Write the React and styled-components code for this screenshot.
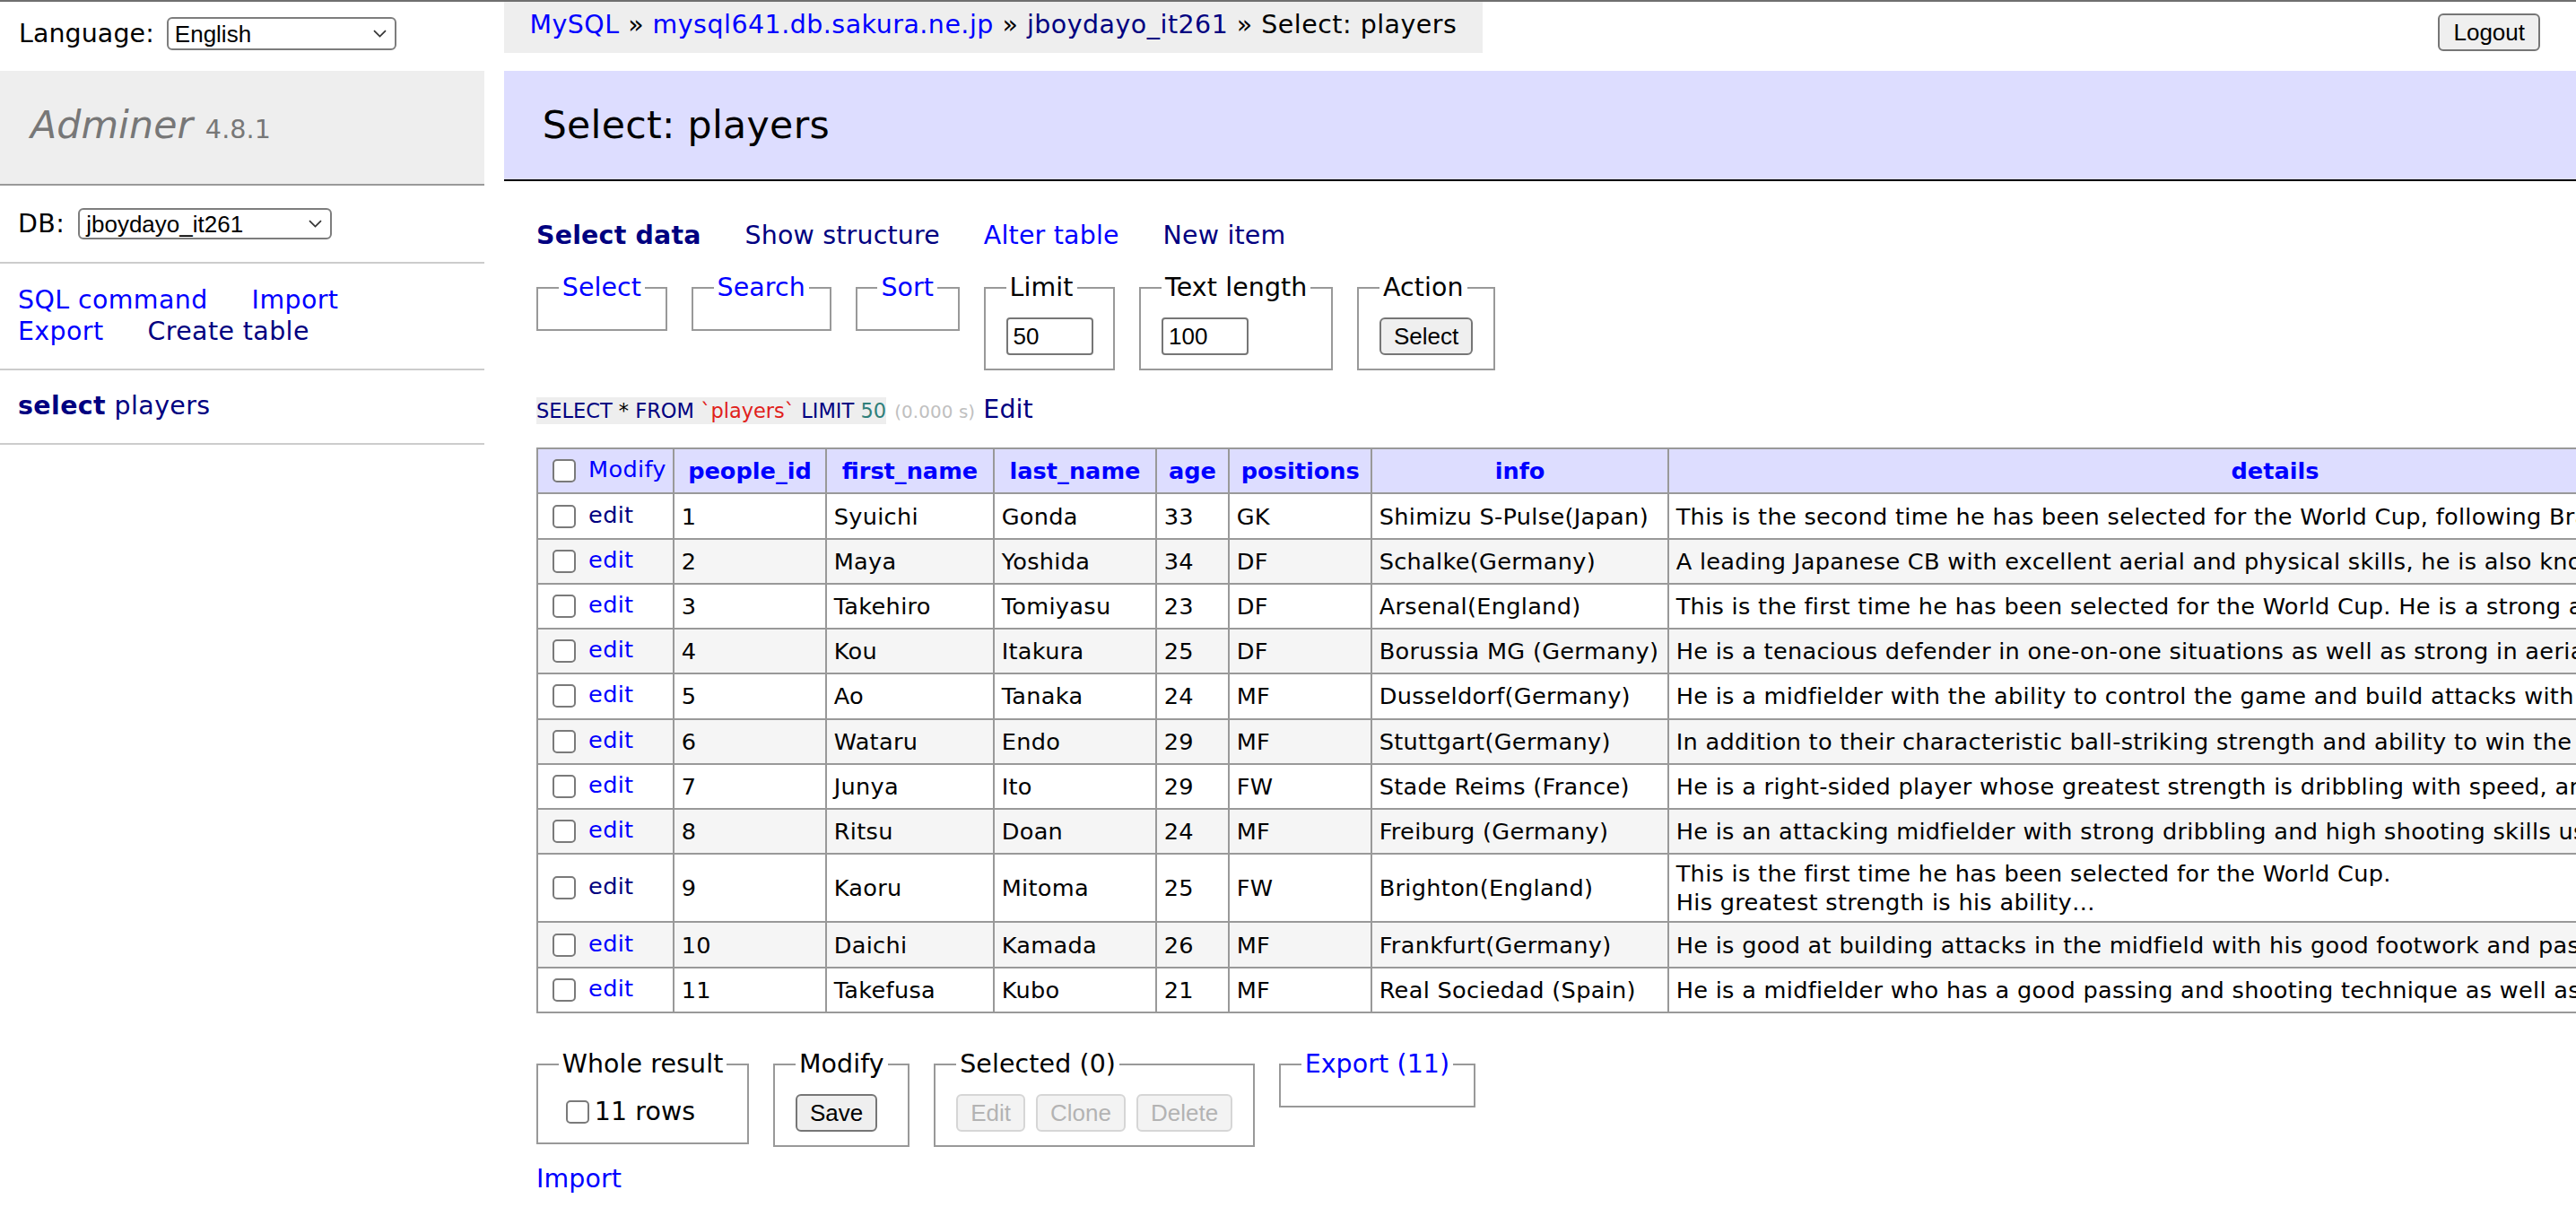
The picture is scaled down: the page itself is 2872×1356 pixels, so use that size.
import React from "react";
import styled, { createGlobalStyle } from "styled-components";

const GlobalStyle = createGlobalStyle`
  html, body {
    margin: 0;
    padding: 0;
    overflow: hidden;
    background: #fff;
  }
  body {
    font-family: "DejaVu Sans", Verdana, sans-serif;
    font-size: 28.44px;
    line-height: 1.25;
    letter-spacing: 0.1px;
    color: #000;
  }
`;

const Page = styled.div`
  width: 100vw;
  min-height: 100vh;
  box-sizing: border-box;
  border-top: 2px solid #6f6f6f;
`;

const TopBar = styled.div`
  display: flex;
  align-items: flex-start;
  height: 57px;
`;

const Lang = styled.div`
  flex: 0 0 562px;
  box-sizing: border-box;
  display: flex;
  align-items: center;
  gap: 14px;
  height: 51px;
  margin-top: 10px;
  padding-left: 21px;
`;

const Breadcrumb = styled.div`
  background: #eee;
  height: 57px;
  line-height: 51px;
  padding: 0 28.44px;
  white-space: nowrap;
  letter-spacing: 0.5px;
`;

const Link = styled.a`
  color: ${(p) => (p.$visited ? "#000080" : "#0000ff")};
  font-weight: ${(p) => (p.$bold ? "bold" : "normal")};
  text-decoration: none;
  cursor: pointer;
`;

const Button = styled.button`
  box-sizing: border-box;
  height: 42px;
  margin: 0;
  padding: 0 14px;
  font: 26px "Liberation Sans", Arial, sans-serif;
  letter-spacing: 0;
  color: ${(p) => (p.disabled ? "#b3b3b3" : "#000")};
  background: ${(p) => (p.disabled ? "#f3f3f3" : "#efefef")};
  border: 2px solid ${(p) => (p.disabled ? "#d6d6d6" : "#767676")};
  border-radius: 6px;
  vertical-align: middle;
`;

const LogoutButton = styled(Button)`
  margin: 13px 40px 0 auto;
  padding: 0 15px;
`;

const SelectBox = styled.div`
  box-sizing: border-box;
  display: inline-flex;
  align-items: center;
  justify-content: space-between;
  width: ${(p) => p.$w}px;
  height: ${(p) => p.$h}px;
  padding: 0 9px 0 7px;
  border: 2px solid #7d7d7d;
  border-radius: 6px;
  background: #fff;
  font: 26px "Liberation Sans", Arial, sans-serif;
  letter-spacing: 0;
  line-height: 1;
  color: #000;
`;

const Main = styled.div`
  display: flex;
  align-items: flex-start;
  margin-top: 20px;
`;

const Menu = styled.div`
  flex: 0 0 540px;
  letter-spacing: 0.4px;
`;

const Brand = styled.h1`
  margin: 0;
  padding: 34.1px 34px;
  font-size: 42.66px;
  line-height: 53.3px;
  font-weight: normal;
  letter-spacing: 0.1px;
  color: #777;
  background: #eee;
  border-bottom: 2px solid #999;
`;

const BrandName = styled.span`
  font-style: italic;
`;

const Version = styled.span`
  font-size: 67%;
`;

const MenuBlock = styled.div`
  padding: 22.75px 20px;
  border-bottom: 2px solid #ccc;
  line-height: 35.55px;
`;

const DbRow = styled(MenuBlock)`
  display: flex;
  align-items: center;
  gap: 15px;
  height: 39px;
`;

const MenuLinks = styled(MenuBlock)`
  ${Link} {
    white-space: nowrap;
    margin-right: 39.5px;
  }
`;

const Content = styled.div`
  flex: 1 1 auto;
  min-width: 0;
  margin-left: 22px;
`;

const Title = styled.h2`
  margin: 0 0 42.5px;
  padding: 34.1px 42.66px;
  font-size: 42.66px;
  line-height: 53.3px;
  font-weight: normal;
  letter-spacing: 0.3px;
  color: #000;
  background: #ddf;
  border-bottom: 2px solid #000;
`;

const Body = styled.div`
  padding-left: 36px;
`;

const Tabs = styled.p`
  margin: 0;
  line-height: 35.55px;
  white-space: nowrap;
  letter-spacing: 0.2px;

  ${Link} {
    margin-right: 39.5px;
  }
`;

const FieldRow = styled.div`
  display: flex;
  align-items: flex-start;
  gap: 27px;
  margin-top: ${(p) => p.$top || 22.75}px;
`;

const Fieldset = styled.fieldset`
  margin: 0;
  min-width: 0;
  padding: 14.2px 22.75px;
  border: 2px solid #999;
  line-height: 35.55px;
`;

const Legend = styled.legend`
  padding: 0 4px;
  white-space: nowrap;
`;

const FieldBody = styled.div`
  display: flex;
  align-items: center;
  gap: 12px;
  min-height: ${(p) => p.$h || 44}px;
`;

const TextInput = styled.input`
  box-sizing: border-box;
  width: 97px;
  height: 42px;
  margin: 0;
  padding: 0 6px;
  font: 26px "Liberation Sans", Arial, sans-serif;
  letter-spacing: 0;
  color: #000;
  background: #fff;
  border: 2px solid #767676;
  border-radius: 4px;
`;

const Check = styled.input.attrs({ type: "checkbox" })`
  appearance: none;
  box-sizing: border-box;
  width: 26px;
  height: 26px;
  margin: 6px 6px 6px 8px;
  border: 2px solid #7a7a7a;
  border-radius: 5px;
  background: #fff;
  vertical-align: middle;
`;

const RowLabel = styled.label`
  display: flex;
  align-items: center;
  white-space: nowrap;
`;

const SqlLine = styled.p`
  margin: 25.5px 0 0;
  line-height: 35.55px;
  white-space: nowrap;
`;

const Code = styled.code`
  font-family: "DejaVu Sans", Verdana, sans-serif;
  font-size: 22.5px;
  letter-spacing: 0;
  padding: 2px 0;
  background: #eee;
  color: #000;
`;

const Token = styled.span`
  color: ${(p) => p.$c};
`;

const Time = styled.span`
  font-size: 70%;
  color: silver;
`;

const Grid = styled.table`
  margin-top: 22px;
  width: 2614px;
  table-layout: fixed;
  border-collapse: collapse;
  font-size: 25.6px;
  line-height: 32px;
  letter-spacing: 0.3px;
`;

const HeadCell = styled.th`
  padding: 5.12px 12.8px;
  background: #ddf;
  border: 2px solid #999;
  text-align: center;
  font-weight: bold;
  white-space: nowrap;
  letter-spacing: 0;
`;

const ModifyCell = styled.td`
  padding: 5.12px 7.68px;
  background: #ddf;
  border: 2px solid #999;
  white-space: nowrap;
`;

const Cell = styled.td`
  padding: 5.12px 7.68px;
  background: ${(p) => (p.$odd ? "#f5f5f5" : "#fff")};
  border: 2px solid #999;
  white-space: pre;
  vertical-align: middle;
`;

const Footer = styled(FieldRow)`
  padding-bottom: 14.2px;
`;

const BottomLink = styled(Link)`
  display: block;
  margin-top: 4px;
  line-height: 35.55px;
`;

const Chevron = () => (
  <svg width="15" height="9" viewBox="0 0 15 9">
    <path d="M1 1.2l6.5 6.3L14 1.2" stroke="#333" strokeWidth="1.7" fill="none" />
  </svg>
);

const columns = [
  { name: "people_id", w: 170 },
  { name: "first_name", w: 187 },
  { name: "last_name", w: 181 },
  { name: "age", w: 81 },
  { name: "positions", w: 159 },
  { name: "info", w: 331 },
  { name: "details", w: 1353 },
];

const players = [
  [1, "Syuichi", "Gonda", 33, "GK", "Shimizu S-Pulse(Japan)", "This is the second time he has been selected for the World Cup, following Brazil 2014. A goalkeeper…"],
  [2, "Maya", "Yoshida", 34, "DF", "Schalke(Germany)", "A leading Japanese CB with excellent aerial and physical skills, he is also known for his leader…"],
  [3, "Takehiro", "Tomiyasu", 23, "DF", "Arsenal(England)", "This is the first time he has been selected for the World Cup. He is a strong and versatile def…"],
  [4, "Kou", "Itakura", 25, "DF", "Borussia MG (Germany)", "He is a tenacious defender in one-on-one situations as well as strong in aerial battles and bu…"],
  [5, "Ao", "Tanaka", 24, "MF", "Dusseldorf(Germany)", "He is a midfielder with the ability to control the game and build attacks with accurate pass…"],
  [6, "Wataru", "Endo", 29, "MF", "Stuttgart(Germany)", "In addition to their characteristic ball-striking strength and ability to win the ball back…"],
  [7, "Junya", "Ito", 29, "FW", "Stade Reims (France)", "He is a right-sided player whose greatest strength is dribbling with speed, and his crosses…"],
  [8, "Ritsu", "Doan", 24, "MF", "Freiburg (Germany)", "He is an attacking midfielder with strong dribbling and high shooting skills using his left…"],
  [9, "Kaoru", "Mitoma", 25, "FW", "Brighton(England)", "This is the first time he has been selected for the World Cup.\nHis greatest strength is his ability…"],
  [10, "Daichi", "Kamada", 26, "MF", "Frankfurt(Germany)", "He is good at building attacks in the midfield with his good footwork and passing range…"],
  [11, "Takefusa", "Kubo", 21, "MF", "Real Sociedad (Spain)", "He is a midfielder who has a good passing and shooting technique as well as dribbling…"],
];

const visitedEdits = [1, 9];

export default function App() {
  return (
    <Page>
      <GlobalStyle />
      <TopBar>
        <Lang>
          Language:
          <SelectBox $w={256} $h={37}>
            English
            <Chevron />
          </SelectBox>
        </Lang>
        <Breadcrumb>
          <Link>MySQL</Link> » <Link>mysql641.db.sakura.ne.jp</Link> »{" "}
          <Link $visited>jboydayo_it261</Link> » Select: players
        </Breadcrumb>
        <LogoutButton>Logout</LogoutButton>
      </TopBar>

      <Main>
        <Menu>
          <Brand>
            <BrandName>Adminer</BrandName> <Version>4.8.1</Version>
          </Brand>
          <DbRow>
            DB:
            <SelectBox $w={283} $h={35}>
              jboydayo_it261
              <Chevron />
            </SelectBox>
          </DbRow>
          <MenuLinks>
            <Link>SQL command</Link> <Link>Import</Link> <Link>Export</Link>{" "}
            <Link $visited>Create table</Link>
          </MenuLinks>
          <MenuBlock>
            <Link $visited $bold>select</Link> <Link $visited>players</Link>
          </MenuBlock>
        </Menu>

        <Content>
          <Title>Select: players</Title>
          <Body>
            <Tabs>
              <Link $visited $bold>Select data</Link> <Link $visited>Show structure</Link>{" "}
              <Link>Alter table</Link> <Link $visited>New item</Link>
            </Tabs>

            <FieldRow>
              <Fieldset>
                <Legend><Link>Select</Link></Legend>
              </Fieldset>
              <Fieldset>
                <Legend><Link>Search</Link></Legend>
              </Fieldset>
              <Fieldset>
                <Legend><Link>Sort</Link></Legend>
              </Fieldset>
              <Fieldset>
                <Legend>Limit</Legend>
                <FieldBody>
                  <TextInput defaultValue="50" />
                </FieldBody>
              </Fieldset>
              <Fieldset>
                <Legend>Text length</Legend>
                <FieldBody>
                  <TextInput defaultValue="100" />
                </FieldBody>
              </Fieldset>
              <Fieldset>
                <Legend>Action</Legend>
                <FieldBody>
                  <Button>Select</Button>
                </FieldBody>
              </Fieldset>
            </FieldRow>

            <SqlLine>
              <Code>
                <Token $c="#000080">SELECT</Token> * <Token $c="#000080">FROM</Token>{" "}
                <Token $c="#e0201a">`players`</Token> <Token $c="#000080">LIMIT</Token>{" "}
                <Token $c="#2f7f7a">50</Token>
              </Code>{" "}
              <Time>(0.000 s)</Time> <Link $visited>Edit</Link>
            </SqlLine>

            <Grid>
              <colgroup>
                <col style={{ width: 152 }} />
                {columns.map((c) => (
                  <col key={c.name} style={{ width: c.w }} />
                ))}
              </colgroup>
              <thead>
                <tr>
                  <ModifyCell>
                    <Check /> <Link>Modify</Link>
                  </ModifyCell>
                  {columns.map((c) => (
                    <HeadCell key={c.name}>
                      <Link $bold>{c.name}</Link>
                    </HeadCell>
                  ))}
                </tr>
              </thead>
              <tbody>
                {players.map((row, i) => (
                  <tr key={row[0]}>
                    <Cell $odd={i % 2 === 1}>
                      <Check /> <Link $visited={visitedEdits.includes(row[0])}>edit</Link>
                    </Cell>
                    {row.map((v, j) => (
                      <Cell key={j} $odd={i % 2 === 1}>
                        {v}
                      </Cell>
                    ))}
                  </tr>
                ))}
              </tbody>
            </Grid>

            <Footer $top={39.5}>
              <Fieldset>
                <Legend>Whole result</Legend>
                <FieldBody $h={41}>
                  <RowLabel>
                    <Check />11 rows
                  </RowLabel>
                </FieldBody>
              </Fieldset>
              <Fieldset>
                <Legend>Modify</Legend>
                <FieldBody>
                  <Button>Save</Button>
                </FieldBody>
              </Fieldset>
              <Fieldset>
                <Legend>Selected (0)</Legend>
                <FieldBody>
                  <Button disabled>Edit</Button>
                  <Button disabled>Clone</Button>
                  <Button disabled>Delete</Button>
                </FieldBody>
              </Fieldset>
              <Fieldset>
                <Legend><Link>Export (11)</Link></Legend>
              </Fieldset>
            </Footer>

            <BottomLink>Import</BottomLink>
          </Body>
        </Content>
      </Main>
    </Page>
  );
}
